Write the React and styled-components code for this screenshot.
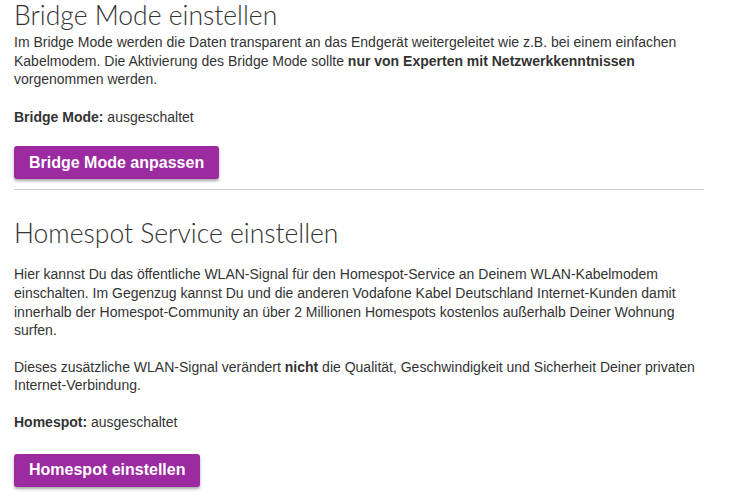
import React from "react";
import styled, { createGlobalStyle } from "styled-components";

const GlobalStyle = createGlobalStyle`
  body {
    margin: 0;
    background: #fff;
    font-family: "Liberation Sans", Arial, sans-serif;
    color: #333;
  }
`;

const Page = styled.div`
  width: 690px;
  padding: 0 0 10px 14px;
`;

const Section = styled.section`
  display: flex;
  flex-direction: column;
  align-items: flex-start;
  padding-top: ${(p) => p.$top || 0}px;
`;

const Title = styled.h2`
  margin: 0 0 ${(p) => p.$gap || 3}px;
  font-family: Lato, "Open Sans", sans-serif;
  font-weight: 300;
  font-size: 26.5px;
  line-height: 30px;
  color: #333;
`;

const Text = styled.p`
  margin: 0 0 ${(p) => p.$gap ?? 18}px;
  font-size: 14px;
  line-height: 18.6px;
`;

const Label = styled.b`
  font-weight: 700;
`;

const Button = styled.button`
  height: 33px;
  padding: 0 15px;
  border: 0;
  border-radius: 3px;
  background: #9c2aa0;
  color: #fff;
  font-family: "Liberation Sans", Arial, sans-serif;
  font-weight: 700;
  font-size: 16px;
  box-shadow: 0 2px 3px rgba(0, 0, 0, 0.35);
  cursor: pointer;
`;

const Divider = styled.hr`
  width: 100%;
  margin: 10px 0 0;
  border: 0;
  border-top: 1px solid #ccc;
`;

export default function App() {
  return (
    <Page>
      <GlobalStyle />
      <Section>
        <Title>Bridge Mode einstellen</Title>
        <Text $gap={19}>
          Im Bridge Mode werden die Daten transparent an das Endgerät weitergeleitet wie z.B. bei einem einfachen
          Kabelmodem. Die Aktivierung des Bridge Mode sollte <Label>nur von Experten mit Netzwerkkenntnissen</Label>{" "}
          vorgenommen werden.
        </Text>
        <Text $gap={20}>
          <Label>Bridge Mode:</Label> ausgeschaltet
        </Text>
        <Button>Bridge Mode anpassen</Button>
        <Divider />
      </Section>
      <Section $top={28}>
        <Title $gap={17}>Homespot Service einstellen</Title>
        <Text>
          Hier kannst Du das öffentliche WLAN-Signal für den Homespot-Service an Deinem WLAN-Kabelmodem
          einschalten. Im Gegenzug kannst Du und die anderen Vodafone Kabel Deutschland Internet-Kunden damit
          innerhalb der Homespot-Community an über 2 Millionen Homespots kostenlos außerhalb Deiner Wohnung
          surfen.
        </Text>
        <Text>
          Dieses zusätzliche WLAN-Signal verändert <Label>nicht</Label> die Qualität, Geschwindigkeit und Sicherheit
          Deiner privaten Internet-Verbindung.
        </Text>
        <Text $gap={22}>
          <Label>Homespot:</Label> ausgeschaltet
        </Text>
        <Button>Homespot einstellen</Button>
      </Section>
    </Page>
  );
}
